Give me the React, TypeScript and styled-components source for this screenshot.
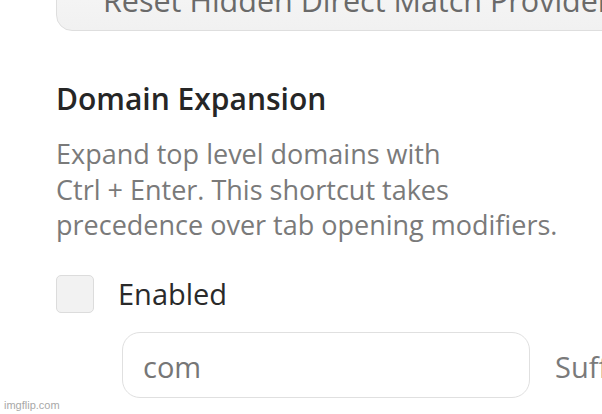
import React from "react";
import styled, { createGlobalStyle } from "styled-components";

const Global = createGlobalStyle`
  html, body {
    margin: 0;
    padding: 0;
    background: #ffffff;
  }
  body {
    font-family: "Open Sans", "Noto Sans", sans-serif;
  }
`;

const Page = styled.div`
  position: relative;
  width: 602px;
  height: 414px;
  overflow: hidden;
  padding-left: 56px;
  box-sizing: border-box;
  background: #fff;
`;

const ResetButton = styled.button`
  display: flex;
  align-items: flex-end;
  width: 680px;
  height: 62px;
  margin-top: -31px;
  padding: 0 0 15px 46px;
  box-sizing: border-box;
  border: 1.5px solid #dedede;
  border-radius: 16px;
  background: linear-gradient(#f7f7f7, #f1f1f1);
  color: #6a6a6a;
  font-family: "Open Sans", sans-serif;
  font-size: 30.5px;
  line-height: 30px;
  white-space: nowrap;
  text-align: left;
`;

const Section = styled.section`
  display: flex;
  flex-direction: column;
  padding-top: 50px;
`;

const Heading = styled.h2`
  margin: 0;
  font-size: 30px;
  line-height: 36px;
  font-weight: 600;
  color: #262626;
`;

const Description = styled.p`
  margin: 19px 0 0;
  font-size: 27px;
  line-height: 35.5px;
  color: #7a7a7a;
`;

const CheckRow = styled.label`
  display: flex;
  align-items: center;
  gap: 24px;
  margin-top: 32px;
`;

const Checkbox = styled.span`
  width: 38px;
  height: 38px;
  box-sizing: border-box;
  border: 1.5px solid #dcdcdc;
  border-radius: 5px;
  background: #f2f2f2;
`;

const CheckLabel = styled.span`
  font-size: 29px;
  line-height: 36px;
  color: #2a2a2a;
`;

const InputRow = styled.div`
  display: flex;
  align-items: center;
  gap: 25px;
  margin-top: 19px;
  padding-left: 66px;
`;

const TextInput = styled.div`
  display: flex;
  align-items: center;
  width: 408px;
  height: 66px;
  flex-shrink: 0;
  box-sizing: border-box;
  padding: 3px 0 0 20px;
  border: 1.5px solid #e0e0e0;
  border-radius: 18px;
  background: #fff;
  font-size: 29px;
  color: #767676;
`;

const Suffix = styled.span`
  padding-top: 3px;
  font-size: 29px;
  color: #7a7a7a;
  white-space: nowrap;
`;

const Watermark = styled.span`
  position: absolute;
  left: 4px;
  bottom: 3px;
  font-family: "Liberation Sans", Arial, sans-serif;
  font-size: 11px;
  color: #a8a8a8;
`;

export default function App() {
  return (
    <>
      <Global />
      <Page>
        <ResetButton>Reset Hidden Direct Match Providers</ResetButton>
        <Section>
          <Heading>Domain Expansion</Heading>
          <Description>
            Expand top level domains with
            <br />
            Ctrl + Enter. This shortcut takes
            <br />
            precedence over tab opening modifiers.
          </Description>
          <CheckRow>
            <Checkbox />
            <CheckLabel>Enabled</CheckLabel>
          </CheckRow>
          <InputRow>
            <TextInput>com</TextInput>
            <Suffix>Suffix</Suffix>
          </InputRow>
        </Section>
        <Watermark>imgflip.com</Watermark>
      </Page>
    </>
  );
}
